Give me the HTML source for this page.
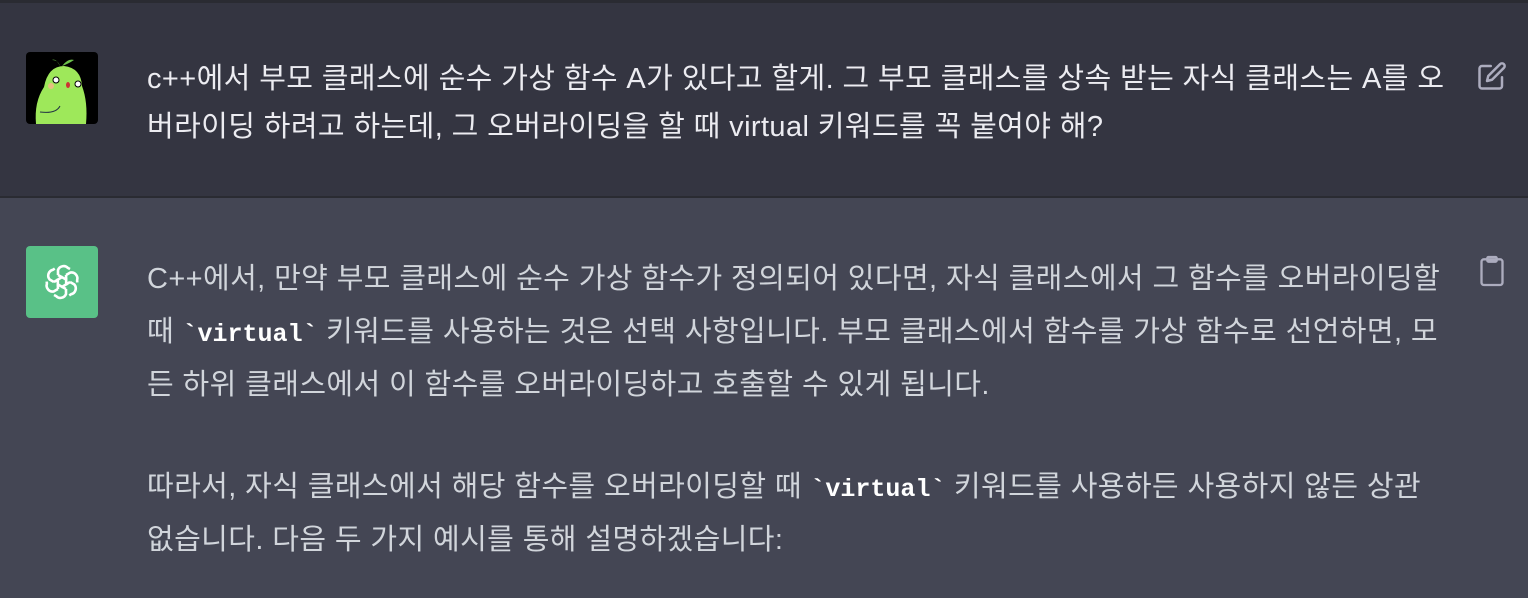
<!DOCTYPE html>
<html><head><meta charset="utf-8"><style>
body{margin:0;width:1528px;height:598px;overflow:hidden;background:#444654;font-family:"Liberation Sans","Noto Sans CJK KR",sans-serif;font-size:29px;letter-spacing:0.4px}
.top{position:absolute;left:0;top:0;width:1528px;height:3px;background:#2a2b32}
.user{position:absolute;left:0;top:3px;width:1528px;height:193px;background:#343541;border-bottom:2px solid #2a2b32}
.av{position:absolute;left:26px;width:72px;height:72px;border-radius:4px}
.t{position:absolute;left:147px;white-space:nowrap}
.t div{height:48px;line-height:48px}
.a div{height:53px;line-height:53px}
code{font-family:"Liberation Mono",monospace;font-weight:bold;color:#fff;font-size:25px;letter-spacing:0}
</style></head><body>
<div class="top"></div>
<div class="user">
 <div class="av" style="top:49px;background:#000;overflow:hidden">
  <svg width="72" height="72" viewBox="0 0 72 72"><path d="M10 72 Q8 50 18 35 Q22 14 38 14 Q55 16 56 34 Q62 50 60 72Z" fill="#9ee85a"/><path d="M34 14 Q30 6 26 8 Q32 8 34 14Z M36 14 Q42 6 48 8 Q42 12 36 14Z" fill="#6cc04a"/><circle cx="30" cy="28" r="3" fill="#fff" stroke="#000"/><circle cx="52" cy="32" r="3" fill="#fff" stroke="#000"/><ellipse cx="42" cy="33" rx="2" ry="3" fill="#c33"/><circle cx="25" cy="34" r="3" fill="#e6c080"/><path d="M14 60 Q30 62 34 54" stroke="#234" fill="none"/></svg>
 </div>
 <div class="t" style="top:52px;color:#ececf1">
  <div>c++에서 부모 클래스에 순수 가상 함수 A가 있다고 할게. 그 부모 클래스를 상속 받는 자식 클래스는 A를 오</div>
  <div>버라이딩 하려고 하는데, 그 오버라이딩을 할 때 virtual 키워드를 꼭 붙여야 해?</div>
 </div>
 <svg style="position:absolute;left:1477px;top:58px" width="30" height="30" viewBox="0 0 24 24" fill="none" stroke="#acacbe" stroke-width="2" stroke-linecap="round" stroke-linejoin="round"><path d="M11 4H4a2 2 0 0 0-2 2v14a2 2 0 0 0 2 2h14a2 2 0 0 0 2-2v-7"/><path d="M18.5 2.5a2.1 2.1 0 0 1 3 3L12 15l-4 1 1-4 9.5-9.5z"/></svg>
</div>
<div class="av" style="top:246px;background:#59c187">
 <svg style="position:absolute;left:16px;top:16px" width="40" height="40" viewBox="-20 -20 40 40" fill="none" stroke="#fff" stroke-width="2.6">
  <g id="p"><path d="M-4 -7 L-4 -12 A6 6 0 0 1 6 -14 L8 -13"/><path d="M-4 -7 L5 -2"/></g>
  <use href="#p" transform="rotate(60)"/><use href="#p" transform="rotate(120)"/><use href="#p" transform="rotate(180)"/><use href="#p" transform="rotate(240)"/><use href="#p" transform="rotate(300)"/>
 </svg>
</div>
<div class="t a" style="top:253px;color:#d1d5db">
 <div>C++에서, 만약 부모 클래스에 순수 가상 함수가 정의되어 있다면, 자식 클래스에서 그 함수를 오버라이딩할</div>
 <div>때 <code>`virtual`</code> 키워드를 사용하는 것은 선택 사항입니다. 부모 클래스에서 함수를 가상 함수로 선언하면, 모</div>
 <div>든 하위 클래스에서 이 함수를 오버라이딩하고 호출할 수 있게 됩니다.</div>
 <div style="height:49px"></div>
 <div>따라서, 자식 클래스에서 해당 함수를 오버라이딩할 때 <code>`virtual`</code> 키워드를 사용하든 사용하지 않든 상관</div>
 <div>없습니다. 다음 두 가지 예시를 통해 설명하겠습니다:</div>
</div>
<svg style="position:absolute;left:1478px;top:255px" width="28" height="32" viewBox="0 0 24 26" fill="none" stroke="#acacbe" stroke-width="2" stroke-linejoin="round"><rect x="3" y="3" width="18" height="22" rx="2"/><rect x="8" y="1" width="8" height="4" rx="1"/></svg>
</body></html>
